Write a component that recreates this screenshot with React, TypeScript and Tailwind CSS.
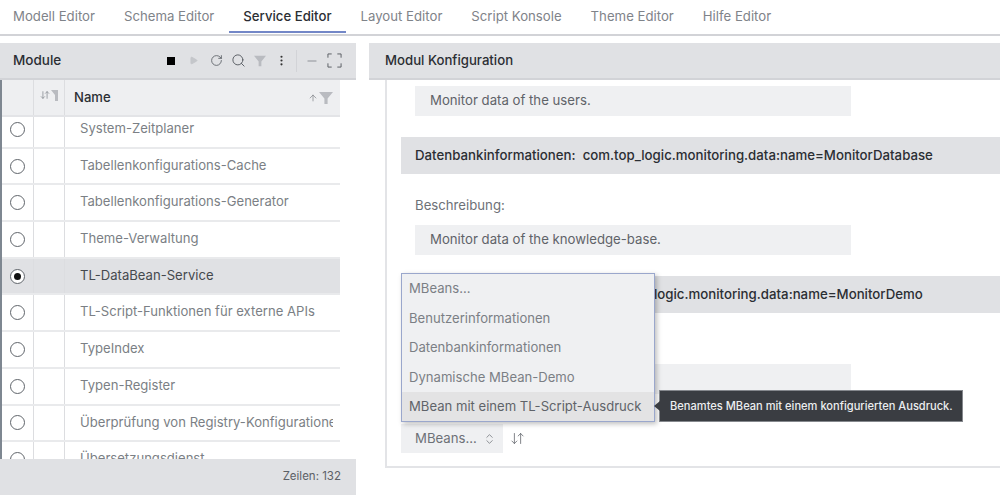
import React from 'react';
import { Play, RotateCw, Search, MoreVertical, Minus, ChevronsUpDown, ArrowDownUp, ArrowUp } from 'lucide-react';

const font = "[font-family:Inter,'Liberation_Sans',sans-serif]";

const tabs = ['Modell Editor', 'Schema Editor', 'Service Editor', 'Layout Editor', 'Script Konsole', 'Theme Editor', 'Hilfe Editor'];

const rows = [
  'System-Zeitplaner',
  'Tabellenkonfigurations-Cache',
  'Tabellenkonfigurations-Generator',
  'Theme-Verwaltung',
  'TL-DataBean-Service',
  'TL-Script-Funktionen für externe APIs',
  'TypeIndex',
  'Typen-Register',
  'Überprüfung von Registry-Konfigurationen',
  'Übersetzungsdienst',
];

const options = ['MBeans...', 'Benutzerinformationen', 'Datenbankinformationen', 'Dynamische MBean-Demo', 'MBean mit einem TL-Script-Ausdruck'];

const FilterIcon = ({ className }: { className: string }) => (
  <svg viewBox="0 0 14 14" className={className} fill="currentColor">
    <path d="M0 1h14L8.6 7.5V13H5.4V7.5z" />
  </svg>
);

// the narrow sort column shows only the right half of the funnel
const HalfFilterIcon = () => (
  <svg viewBox="0 0 7 11" className="ml-[1px] w-[7px] h-[11px] text-[#b9bbc0]" fill="currentColor">
    <path d="M0 0h7v11H4V5z" />
  </svg>
);

const Maximize = () => (
  <svg viewBox="0 0 16 16" className="w-[15px] h-[15px] text-[#555a60]" fill="none" stroke="currentColor" strokeWidth="1">
    <path d="M1 5V1h4M11 1h4v4M15 11v4h-4M5 15H1v-4" />
  </svg>
);

const Radio = ({ checked }: { checked?: boolean }) => (
  <span className="w-[15px] h-[15px] rounded-full border border-[#60656b] bg-white flex items-center justify-center">
    {checked && <span className="w-[7px] h-[7px] rounded-full bg-[#111]" />}
  </span>
);

const Row = ({ name, index }: { name: string; index: number }) => {
  const selected = index === 4;
  return (
    <div className={`flex h-[36.7px] shrink-0 border-b-2 border-[#e9eaec] ${selected ? 'bg-[#e0e1e4]' : 'bg-white'}`}>
      <div className="w-[32px] flex items-center justify-center border-r border-[#dcdde0]">
        <Radio checked={selected} />
      </div>
      <div className="w-[31px] border-r border-[#dcdde0]" />
      <div className={`flex-1 min-w-0 pl-[15px] pr-[7px] pb-[1px] flex items-center text-[13.1px] whitespace-nowrap overflow-hidden ${selected ? 'text-[#45494e]' : 'text-[#7b7f85]'}`}>
        <span className="block w-full overflow-hidden">{name}</span>
      </div>
    </div>
  );
};

const LeftPanel = () => (
  <div className="w-[356px] shrink-0 flex flex-col h-[452px]">
    <div className="h-[37px] shrink-0 bg-[#e0e1e4] border-b-2 border-[#d2d3d7] flex items-center pl-[13px] pr-[14px]">
      <span className="text-[13.5px] font-medium text-[#2b2e33]">Module</span>
      <div className="ml-auto flex items-center text-[#555a60]">
        <div className="w-[8px] h-[8px] bg-black" />
        <Play className="ml-[14px] w-[9px] h-[9px] text-[#c4c6ca]" fill="currentColor" />
        <RotateCw className="ml-[12px] w-[13px] h-[13px]" strokeWidth={1.5} />
        <Search className="ml-[8px] w-[15px] h-[15px]" strokeWidth={1.5} />
        <FilterIcon className="ml-[8px] w-[12px] h-[12px] text-[#b9bbc0]" />
        <MoreVertical className="ml-[9px] w-[13px] h-[13px] text-[#333]" strokeWidth={2} />
        <div className="ml-[8px] w-px h-[22px] bg-[#d2d3d7]" />
        <Minus className="ml-[8px] w-[14px] h-[14px]" strokeWidth={1} />
        <div className="ml-[8px] flex"><Maximize /></div>
      </div>
    </div>
    <div className="flex-1 min-h-0 flex flex-col w-[340px] border-l-2 border-[#7e8791] overflow-hidden">
      <div className="h-[37px] shrink-0 relative z-10 bg-[#eeeff1] border-b-2 border-[#e3e4e7] flex">
        <div className="w-[32px] border-r border-[#dcdde0]" />
        <div className="w-[31px] border-r border-[#dcdde0] flex items-start pt-[10px] pl-[6px] text-[#8d9197]">
          <ArrowDownUp className="w-[10px] h-[10px]" strokeWidth={2} />
          <HalfFilterIcon />
        </div>
        <div className="flex-1 pl-[9px] pr-[7px] flex items-center text-[13.1px] font-medium text-[#2b2e33]">
          Name
          <ArrowUp className="ml-auto w-[10px] h-[10px] text-[#70747a]" strokeWidth={1.5} />
          <FilterIcon className="ml-[1px] w-[14px] h-[14px] text-[#b9bbc0]" />
        </div>
      </div>
      <div className="-mt-[5px] flex-1 min-h-0 overflow-hidden flex flex-col">
        {rows.map((name, i) => <Row key={name} name={name} index={i} />)}
      </div>
    </div>
    <div className="h-[36px] shrink-0 bg-[#e0e1e4] flex items-center justify-end pr-[15px] text-[11.5px] text-[#5c6066]">
      Zeilen: 132
    </div>
  </div>
);

const SectionHeader = ({ children }: { children: React.ReactNode }) => (
  <div className="h-[37px] bg-[#e0e1e4] flex items-center pl-[14px] text-[13.25px] font-medium text-[#2b2e33] whitespace-pre">
    {children}
  </div>
);

const Description = ({ children }: { children?: React.ReactNode }) => (
  <div className="h-[30px] w-[436px] ml-[28px] bg-[#eff0f2] flex items-center pl-[15px] text-[13.2px] text-[#5f6369]">
    {children}
  </div>
);

const Dropdown = () => (
  <div className="absolute left-[14px] top-[193px] w-[254px] h-[149px] z-20 bg-[#eff0f2] border border-[#9aa7cc] shadow-[2px_2px_5px_rgba(0,0,0,0.25)] flex flex-col overflow-hidden text-[13.1px] text-[#7b7f85]">
    {options.map((o, i) => (
      <div key={o} className={`h-[29.6px] shrink-0 flex items-center pl-[7px] whitespace-nowrap ${i === 4 ? 'bg-[#e3e3e4] text-[#5f6369]' : ''}`}>{o}</div>
    ))}
  </div>
);

const Tooltip = () => (
  <div className="absolute left-[272px] top-[310px] z-30 h-[32px] w-[304px] bg-[#3a3d42] border border-[#85888d] flex items-center pl-[10px] text-[11.1px] font-medium text-[#eceef0] whitespace-nowrap">
    <span className="absolute -left-[6px] top-[10px] w-0 h-0 border-y-[5px] border-y-transparent border-r-[6px] border-r-[#3a3d42]" />
    Benamtes MBean mit einem konfigurierten Ausdruck.
  </div>
);

const RightPanel = () => (
  <div className="flex-1 min-w-0 flex flex-col ml-[13px]">
    <div className="h-[37px] shrink-0 bg-[#e0e1e4] border-b-2 border-[#d2d3d7] flex items-center pl-[16px] text-[13.2px] font-medium text-[#2b2e33]">
      Modul Konfiguration
    </div>
    <div className="relative ml-[16px] h-[388px] border-l-2 border-b-2 border-[#e3e4e7] pt-[6px] flex flex-col">
      <Description>Monitor data of the users.</Description>
      <div className="ml-[14px] mt-[21px]">
        <SectionHeader>Datenbankinformationen:  com.top_logic.monitoring.data:name=MonitorDatabase</SectionHeader>
      </div>
      <div className="ml-[28px] mt-[23px] h-[18px] flex items-center text-[13.2px] text-[#6d7177]">Beschreibung:</div>
      <div className="mt-[10px]"><Description>Monitor data of the knowledge-base.</Description></div>
      <div className="ml-[14px] mt-[21px]">
        <SectionHeader>Dynamische MBean-Demo:  com.top_logic.monitoring.data:name=MonitorDemo</SectionHeader>
      </div>
      <div className="mt-[51px]"><Description /></div>
      <div className="ml-[14px] mt-[30px] flex items-center">
        <div className="h-[29px] w-[102px] bg-[#eff0f2] flex items-center pl-[14px] text-[13.2px] text-[#6d7177]">
          MBeans...
          <ChevronsUpDown className="ml-[6px] w-[13px] h-[14px] text-[#5f6369]" strokeWidth={1.25} />
        </div>
        <ArrowDownUp className="ml-[7px] w-[15px] h-[15px] text-[#5f6369]" strokeWidth={1.25} />
      </div>
      <Dropdown />
      <Tooltip />
    </div>
  </div>
);

export default function App() {
  return (
    <div className={`w-[1000px] h-[495px] overflow-hidden bg-white ${font}`}>
      <div className="h-[36px] border-b-2 border-[#d2d3d7] flex items-center pl-[13px] gap-[29px] text-[13.2px] text-[#7f8389]">
        {tabs.map((t) => (
          <div key={t} className={t === 'Service Editor' ? 'relative font-medium text-[#2b2e33]' : ''}>
            {t}
            {t === 'Service Editor' && <span className="absolute -left-[14px] -right-[14px] top-[24px] h-[2px] bg-[#7387c7]" />}
          </div>
        ))}
      </div>
      <div className="mt-[7px] flex">
        <LeftPanel />
        <RightPanel />
      </div>
    </div>
  );
}
